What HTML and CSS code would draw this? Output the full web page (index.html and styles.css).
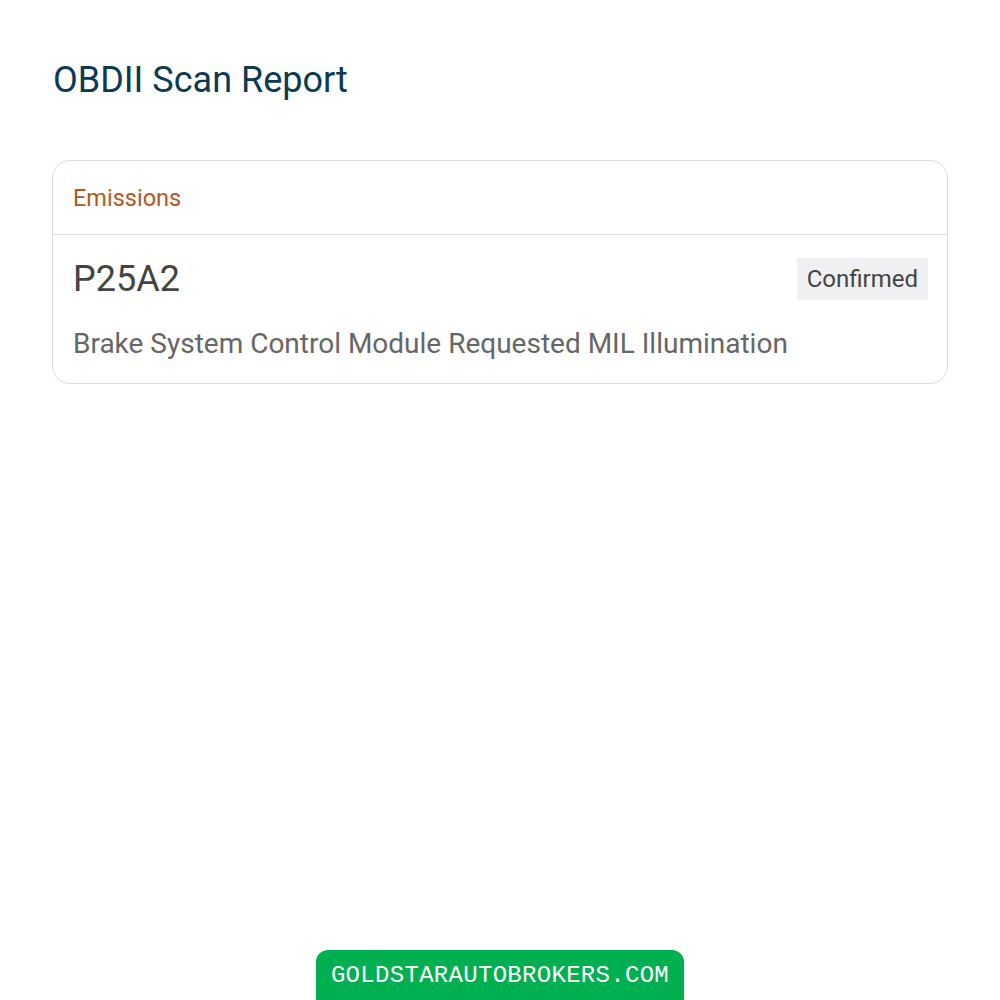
FILE: index.html
```html
<!DOCTYPE html>
<html lang="en">
<head>
    <meta charset="UTF-8">
    <meta name="viewport" content="width=device-width, initial-scale=1.0">
    <title>OBDII Scan Report</title>
    <link rel="stylesheet" href="styles.css">
</head>
<body>

<div class="page">
    <h1 class="title">OBDII Scan Report</h1>

    <div class="card">
        <div class="card-head">Emissions</div>
        <div class="card-body">
            <div class="code-row">
                <span class="code">P25A2</span>
                <span class="status">Confirmed</span>
            </div>
            <p class="desc">Brake System Control Module Requested MIL Illumination</p>
        </div>
    </div>
</div>

<div class="footer">
    <span class="brand">GOLDSTARAUTOBROKERS.COM</span>
</div>

</body>
</html>
```

FILE: styles.css
```css
html, body {
    margin: 0;
    padding: 0;
    height: 100%;
}
body {
    font-family: Roboto, "Noto Sans", sans-serif;
    background: #fff;
    display: flex;
    flex-direction: column;
    min-height: 1000px;
}
.page {
    flex: 1;
    padding: 58px 52px 0 52px;
}
.title {
    margin: 0 0 58px 1px;
    font-size: 36px;
    font-weight: 400;
    line-height: 44px;
    color: #0b3a52;
}
.card {
    border: 1px solid #dcdcdc;
    border-radius: 18px;
}
.card-head {
    padding: 23px 20px 22px 20px;
    font-size: 23.5px;
    line-height: 28px;
    color: #b3581f;
    border-bottom: 1px solid #dcdcdc;
}
.card-body {
    padding: 23px 19px 22px 20px;
}
.code-row {
    display: flex;
    justify-content: space-between;
    align-items: center;
}
.code {
    font-size: 36px;
    line-height: 42px;
    color: #444;
}
.status {
    background: #f0f0f2;
    color: #444;
    font-size: 24px;
    line-height: 42px;
    padding: 0 10px;
}
.desc {
    margin: 27px 0 0 0;
    font-size: 28px;
    line-height: 34px;
    color: #666;
}
.footer {
    display: flex;
    justify-content: center;
}
.brand {
    background: #00b050;
    color: #fff;
    font-family: "Liberation Mono", monospace;
    font-size: 24px;
    letter-spacing: 0.3px;
    padding: 12px 15px 11px 15px;
    border-radius: 12px 12px 0 0;
}
```
